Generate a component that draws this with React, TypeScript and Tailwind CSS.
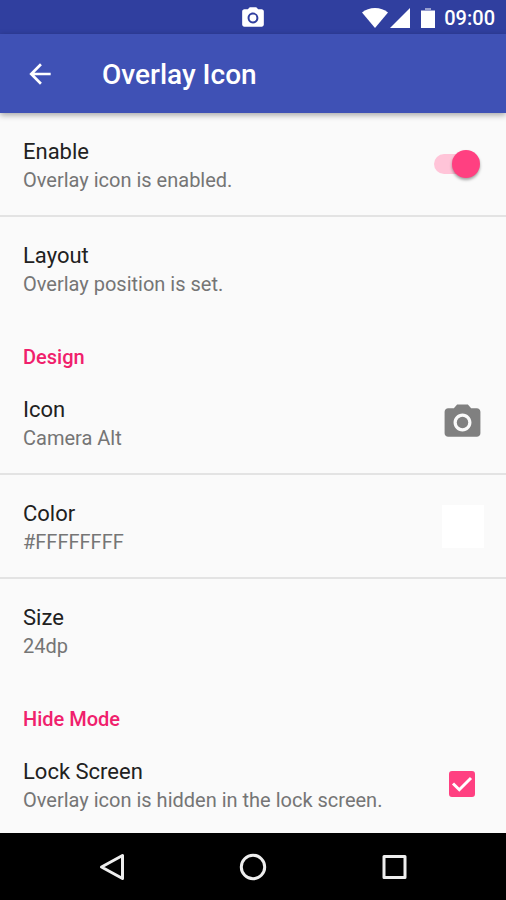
import React, { useState } from 'react';

const CameraIcon: React.FC<{ className?: string }> = ({ className }) => (
  <svg viewBox="0 0 24 24" fill="currentColor" className={className} aria-hidden="true">
    <circle cx="12" cy="12" r="3.2" />
    <path d="M9 2 7.17 4H4c-1.1 0-2 .9-2 2v12c0 1.1.9 2 2 2h16c1.1 0 2-.9 2-2V6c0-1.1-.9-2-2-2h-3.17L15 2H9zm3 15c-2.76 0-5-2.24-5-5s2.24-5 5-5 5 2.24 5 5-2.24 5-5 5z" />
  </svg>
);

const StatusBar: React.FC = () => (
  <div className="grid h-[34px] shrink-0 grid-cols-[1fr_auto_1fr] items-center bg-[#303f9f] text-white">
    <span />
    <CameraIcon className="mt-[2px] size-[26px]" />
    <div className="flex items-center justify-end pt-[2px] pr-[11px]">
      <svg viewBox="0 0 26 20" className="mr-[2px] h-5 w-[26px]" fill="currentColor" aria-hidden="true">
        <path d="M13 20 0 4.500C3.500 1.600 8 0 13 0s9.500 1.600 13 4.500L13 20z" />
      </svg>
      <svg viewBox="0 0 20 20" className="mr-[11px] size-5" fill="currentColor" aria-hidden="true">
        <path d="M20 0v20H0z" />
      </svg>
      <svg viewBox="0 0 14 20" className="mr-[9px] h-5 w-[14px]" fill="currentColor" aria-hidden="true">
        <path d="M4 0h6v2h4v1H0V2h4z" opacity="0.5" />
        <path d="M0 3h14v17H0z" />
      </svg>
      <span className="text-[20px] leading-7 font-medium">09:00</span>
    </div>
  </div>
);

const AppBar: React.FC = () => (
  <header className="relative flex h-[79px] shrink-0 items-center bg-[#3f51b5] pl-6 text-white shadow-[0_2px_6px_rgba(0,0,0,0.35)]">
    <button type="button" aria-label="Back" className="mr-[46px]">
      <svg viewBox="0 0 24 24" className="size-8" fill="currentColor" aria-hidden="true">
        <path d="M20 11H7.830l5.590-5.590L12 4l-8 8 8 8 1.410-1.410L7.830 13H20v-2z" />
      </svg>
    </button>
    <h1 className="pt-[2px] text-[28px] leading-8 font-medium">Overlay Icon</h1>
  </header>
);

interface PreferenceProps {
  title: string;
  summary: string;
  htmlFor?: string;
  divider?: boolean;
  children?: React.ReactNode;
}

const Preference: React.FC<PreferenceProps> = ({ title, summary, htmlFor, divider, children }) => {
  const text = (
    <>
      <span className="block text-[22px] leading-[30px] text-[#212121]">{title}</span>
      <span className="block text-[20px] leading-[26px] text-[#757575]">{summary}</span>
    </>
  );

  return (
    <div className={divider ? 'flex items-center border-b-2 border-[#e3e3e3] pr-[22px] pl-[23px]' : 'flex items-center pr-[22px] pl-[23px]'}>
      {htmlFor ? (
        <label htmlFor={htmlFor} className="flex-1 pt-6 pb-[22px]">{text}</label>
      ) : (
        <button type="button" className="flex-1 pt-6 pb-[22px] text-left">{text}</button>
      )}
      {children}
    </div>
  );
};

const CategoryTitle: React.FC<{ children: React.ReactNode }> = ({ children }) => (
  <h2 className="pt-6 pl-[23px] text-[20px] leading-7 font-medium text-[#f0206c]">{children}</h2>
);

const NavigationBar: React.FC = () => (
  <nav className="grid h-[67px] shrink-0 grid-cols-3 items-center bg-black px-[8%] text-[#eeeeee]">
    <button type="button" aria-label="Back" className="flex justify-center">
      <svg viewBox="0 0 28 28" className="size-7" fill="none" stroke="currentColor" strokeWidth="3" strokeLinejoin="round" aria-hidden="true">
        <path d="M25.500 2.500v23L4.500 14z" />
      </svg>
    </button>
    <button type="button" aria-label="Home" className="flex justify-center">
      <svg viewBox="0 0 28 28" className="size-7" fill="none" stroke="currentColor" strokeWidth="3" aria-hidden="true">
        <circle cx="14" cy="14" r="11.700" />
      </svg>
    </button>
    <button type="button" aria-label="Recent apps" className="flex justify-center">
      <svg viewBox="0 0 28 28" className="size-7" fill="none" stroke="currentColor" strokeWidth="3" strokeLinejoin="round" aria-hidden="true">
        <path d="M3 3.500h21v21H3z" />
      </svg>
    </button>
  </nav>
);

const App: React.FC = () => {
  const [enabled, setEnabled] = useState(true);
  const [hideOnLock, setHideOnLock] = useState(true);

  return (
    <div className="flex h-screen flex-col bg-[#fafafa] font-[Roboto,sans-serif]">
      <StatusBar />
      <AppBar />
      {/* Only the list scrolls, the bars stay in place */}
      <main className="min-h-0 flex-1 overflow-y-auto [scrollbar-width:none]">
        <Preference title="Enable" summary="Overlay icon is enabled." htmlFor="enable" divider>
          <span className="relative mr-1 flex h-7 w-[46px] items-center">
            <input
              id="enable"
              type="checkbox"
              role="switch"
              checked={enabled}
              onChange={(e) => setEnabled(e.target.checked)}
              className="peer h-5 w-10 appearance-none rounded-full bg-[#bdbdbd] checked:bg-[#ffc4d8]"
            />
            <span className="pointer-events-none absolute top-0 left-0 size-7 rounded-full bg-white shadow-[0_2px_3px_rgba(0,0,0,0.35)] peer-checked:right-0 peer-checked:left-auto peer-checked:bg-[#ff4081]" />
          </span>
        </Preference>
        <Preference title="Layout" summary="Overlay position is set." />

        <CategoryTitle>Design</CategoryTitle>
        <Preference title="Icon" summary="Camera Alt" divider>
          <CameraIcon className="size-[43px] text-[#808080]" />
        </Preference>
        <Preference title="Color" summary="#FFFFFFFF" divider>
          <span className="h-[43px] w-[42px] bg-white" />
        </Preference>
        <Preference title="Size" summary="24dp" />

        <CategoryTitle>Hide Mode</CategoryTitle>
        <Preference title="Lock Screen" summary="Overlay icon is hidden in the lock screen." htmlFor="lock-screen">
          <span className="relative mr-[9px] size-[26px]">
            <input
              id="lock-screen"
              type="checkbox"
              checked={hideOnLock}
              onChange={(e) => setHideOnLock(e.target.checked)}
              className="peer block size-[26px] appearance-none rounded-[3px] border-2 border-[#757575] checked:border-[#ff4081] checked:bg-[#ff4081]"
            />
            <svg viewBox="0 0 26 26" className="pointer-events-none absolute inset-0 hidden size-[26px] peer-checked:block" fill="none" stroke="white" strokeWidth="3" aria-hidden="true">
              <path d="m4 12.500 6.300 6.200L22 7" />
            </svg>
          </span>
        </Preference>
      </main>
      <NavigationBar />
    </div>
  );
};

export default App;
